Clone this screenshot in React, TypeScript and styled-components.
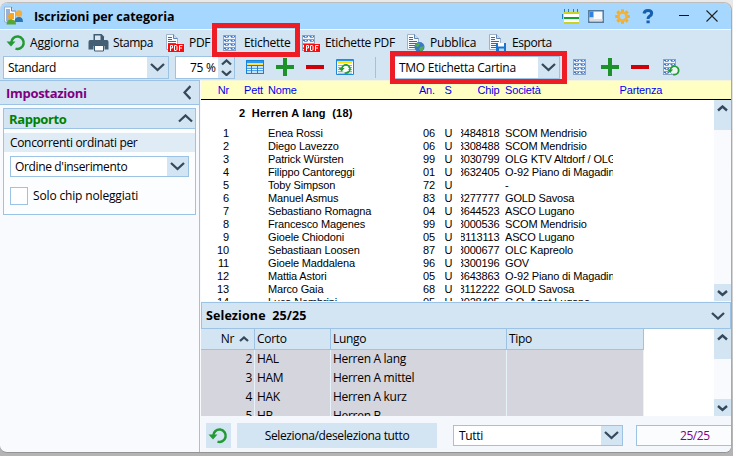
import React from 'react';
import styled, { createGlobalStyle, css } from 'styled-components';

const LINE = '#9cc3e3';
const PANEL = '#d3e5f3';
const PALE = '#f8fafd';
const RED = '#ee1c25';

const Global = createGlobalStyle`
  * { box-sizing: border-box; }
  body { margin: 0; overflow: hidden; background: #b5b5b5; }
  #root { font: 12px/16px "Open Sans", "Noto Sans", sans-serif; color: #000; }
`;

const Desktop = styled.div`
  width: 733px; height: 456px; padding-top: 3px;
  background: linear-gradient(#e9e9e9 0, #d4d4d4 60%, #b4b4b4 98%);
`;
const Window = styled.div`
  width: 732px; height: 450px; position: relative; display: flex; flex-direction: column;
  background: ${PALE}; border-right: 1px solid #a9a9a9; border-bottom: 1px solid #949494;
  border-radius: 8px 8px 7px 7px; overflow: hidden; box-shadow: 0 -1px 0 #bdbdbd;
`;
const Text = styled.span<{ $ls?: number; $bold?: boolean; $size?: number; $color?: string }>`
  white-space: pre; letter-spacing: ${p => p.$ls ?? -0.3}px;
  ${p => p.$bold && css`font-weight: 700;`}
  ${p => p.$size && css`font-size: ${p.$size}px;`}
  ${p => p.$color && css`color: ${p.$color};`}
`;

const TitleBar = styled.header`
  height: 27px; flex: none; display: flex; align-items: center; padding: 0 7px 0 4px;
  background: #a6d7ff; border-bottom: 1px solid #f4faff;
`;
const TitleText = styled.div`flex: 1; padding: 1px 0 0 8px;`;
const TitleIcons = styled.div`display: grid; grid-template-columns: 26px 26px 26px 38px 28px 18px; height: 20px;`;

const Toolbar = styled.div`flex: none; height: 50px; background: ${PANEL};`;
const Actions = styled.div`
  display: grid; height: 26px; padding-left: 4px; align-items: center;
  grid-template-columns: 83px 76px 55px 81px 105px 82px 80px;
`;
const Action = styled.div`display: flex; align-items: center; & > svg { margin-right: 2px; flex: none; }`;
const Controls = styled.div`display: flex; height: 24px; padding-left: 3px; align-items: flex-start; & > svg { flex: none; }`;
const Gap = styled.div<{ $w: number }>`width: ${p => p.$w}px; flex: none;`;
const Separator = styled.div`width: 1px; height: 21px; margin: 1px 18px 0 21px; background: ${LINE};`;

const Combo = styled.div<{ $w: number; $h: number; $pad?: number }>`
  flex: none; width: ${p => p.$w}px; height: ${p => p.$h}px; display: flex; align-items: center;
  border: 1px solid ${LINE}; background: #fff; padding-left: ${p => p.$pad ?? 4}px; justify-content: space-between;
`;
const ComboArrow = styled.div`
  width: 21px; align-self: stretch; display: grid; place-items: center;
  background: ${PANEL};
`;
const Spin = styled.div`
  width: 16px; align-self: stretch; display: grid; grid-template-rows: 1fr 1fr; place-items: center;
  background: ${PANEL};
`;

const Main = styled.div`flex: 1; min-height: 0; display: grid; grid-template-columns: 200px 531px;`;
const Side = styled.aside`border-right: 1px solid ${LINE}; border-top: 1px solid ${LINE};`;
const SideHead = styled.div`
  height: 24px; display: flex; align-items: center; justify-content: space-between;
  padding: 0 8px 0 6px; background: ${PANEL}; border-bottom: 1px solid ${LINE};
`;
const Group = styled.section`margin: 3px; height: 107px; border: 1px solid ${LINE}; background: #fcfdfe;`;
const GroupHead = styled.div`
  height: 20px; display: flex; align-items: center; justify-content: space-between;
  padding: 0 2px 0 5px; background: ${PANEL}; border-bottom: 1px solid ${LINE};
`;
const FieldLabel = styled.div`height: 19px; line-height: 19px; margin: 4px 0; padding-left: 6px; background: #dfebf5;`;
const Field = styled.div`padding-left: 6px;`;
const CheckRow = styled.label`display: flex; align-items: center; gap: 5px; padding: 10px 0 0 6px;`;
const CheckBox = styled.span`width: 18px; height: 18px; border: 1px solid ${LINE}; background: #fff;`;

const Content = styled.main`padding-left: 1px; display: flex; flex-direction: column; min-width: 0;`;
const ReportHead = styled.div`
  height: 20px; flex: none; background: #ffffc4; border-bottom: 1px solid #000; border-top: 1px solid #f2f5da; color: #0000f0;
`;
const ReportBody = styled.div`height: 201px; flex: none; display: flex; background: #fff; overflow: hidden;`;
const ReportPage = styled.div`width: 513px; overflow: hidden;`;
const ReportGrid = styled.div`
  display: grid; grid-template-columns: 28px 34px 5px 150px 17px 9.5px 12px 4.5px 38.5px 5.5px 108px 6.5px 60px;
  height: 13px; font: 11px/13px "Liberation Sans", sans-serif; letter-spacing: -0.15px; white-space: pre;
`;
const HeadGrid = styled(ReportGrid)`padding-top: 3px; height: 18px;`;
const Cell = styled.span<{ $col: number; $right?: boolean; $clip?: boolean }>`
  grid-column: ${p => p.$col}; grid-row: 1; min-width: 0; display: flex;
  justify-content: ${p => (p.$right ? 'flex-end' : 'flex-start')};
  ${p => p.$clip && css`overflow: hidden;`}
`;
const Category = styled.div`
  height: 27px; padding: 7px 0 0 38px; white-space: pre;
  font: 700 11px/13px "Liberation Sans", sans-serif; letter-spacing: 0.2px;
`;
const Scroll = styled.div`
  width: 17px; margin-left: auto; display: flex; flex-direction: column; justify-content: space-between; background: ${PALE};
`;
const ScrollTop = styled.div`height: 30px; background: ${PANEL}; padding: 5px 0 0 3px; line-height: 0;`;
const ScrollEnd = styled.div`height: 17px; background: ${PANEL}; padding: 6px 0 0 3px; line-height: 0;`;

const SelectionBar = styled.div`
  height: 27px; flex: none; margin-top: 1px; display: flex; align-items: center; justify-content: space-between;
  padding: 0 5px 0 4px; background: ${PANEL}; border: 1px solid ${LINE};
`;
const TableArea = styled.div`height: 87px; flex: none; display: flex; background: #fff; overflow: hidden;`;
const Table = styled.div`width: 443px; height: 87px; overflow: hidden;`;
const columns = css`display: grid; grid-template-columns: 54px 76px 176px 137px;`;
const TableHead = styled.div`${columns} height: 21px; background: ${PANEL}; border-bottom: 1px solid ${LINE};`;
const TableRow = styled.div`${columns} height: 19px; background: #d5d5de;`;
const HeadCell = styled.div<{ $right?: boolean }>`
  border-right: 1px solid ${LINE}; padding: 0 5px 0 2px; display: flex; gap: 5px; align-items: center;
  justify-content: ${p => (p.$right ? 'flex-end' : 'flex-start')};
`;
const DataCell = styled.div<{ $right?: boolean }>`
  border-right: 1px solid #e8f2fb; padding: 1px 2px 0 2px; text-align: ${p => (p.$right ? 'right' : 'left')};
`;
const Footer = styled.footer`flex: 1; display: flex; align-items: flex-start; padding: 7px 0 0 5px; background: #f4f8fc;`;
const Button = styled.button<{ $w: number }>`
  width: ${p => p.$w}px; height: 25px; padding: 0; border: 0; display: grid; place-items: center;
  background: ${PANEL}; font: inherit; color: inherit; margin-right: 6px; flex: none;
`;
const FooterCombo = styled.div`margin: 2px 13px 0 10px;`;
const Counter = styled.div`
  height: 21px; margin-top: 2px; flex: 1; border: 1px solid ${LINE}; border-right: 0;
  padding-left: 43px; line-height: 19px; background: #fafcfe;
`;
const Highlight = styled.div<{ $x: number; $y: number; $w: number; $h: number }>`
  position: absolute; left: ${p => p.$x}px; top: ${p => p.$y}px; width: ${p => p.$w}px; height: ${p => p.$h}px;
  border: 5px solid ${RED}; pointer-events: none;
`;

/* Icons */
type Dir = 'up' | 'down' | 'left';
const Chevron = ({ dir, w = 15, s = 2.3 }: { dir: Dir; w?: number; s?: number }) => {
  const h = w / 2 + 1;
  const d = { up: `M1 ${h - 1}L${w / 2} 1.5L${w - 1} ${h - 1}`, down: `M1 1L${w / 2} ${h - 1.5}L${w - 1} 1`, left: `M${h - 1} 1L1.5 ${w / 2}L${h - 1} ${w - 1}` }[dir];
  const [vw, vh] = dir === 'left' ? [h, w] : [w, h];
  return <svg width={vw} height={vh} viewBox={`0 0 ${vw} ${vh}`}><path d={d} fill="none" stroke="#34495c" strokeWidth={s} /></svg>;
};
const RefreshShape = ({ color = '#249a34' }) => (
  <>
    <path d="M4.8 8.6A6.2 6.2 0 1 1 9 14.6" fill="none" stroke={color} strokeWidth="2.5" />
    <path d="M0 7.4H9L4.5 12.6Z" fill={color} />
  </>
);
const Refresh = () => <svg width="24" height="20" viewBox="0 0 24 20"><g transform="translate(2.5 1)"><RefreshShape /></g></svg>;
const Printer = () => (
  <svg width="24" height="20" viewBox="0 0 24 20">
    <path d="M6.500 1h8l2.500 2.500V7H6.500z" fill="#3f5b70" /><path d="M8 2.500h5.500V7H8z" fill="#d9e6ef" />
    <path d="M3 7h17q1.500 0 1.500 2v7.500h-4V13h-11v3.500h-5V9q0-2 1.500-2z" fill="#456074" />
    <path d="M7.500 12.500h9V18h-9z" fill="#fff" stroke="#3f5b70" />
  </svg>
);
const Doc = () => (
  <>
    <path d="M3.5 1.5h7l4 4v11h-11z" fill="#f8fbff" stroke="#9db3cc" />
    <path d="M10.5 1.5v4h4" fill="#c9ddf0" stroke="#5f85b5" />
    <path d="M5 4.500h4M5 6.500h4M5 8.500h8M5 10.500h8M5 12.500h8M5 14.500h6" stroke="#3e69ae" />
  </>
);
const PdfTag = ({ x = 5 }: { x?: number }) => (
  <>
    <rect x={x} y="11" width="16" height="8" fill="#fa0c0c" />
    <path transform={`translate(${x} 0)`} d="M2.5 18v-5.5h2v2.5h-2M6.5 12.5v5h1.5q1-.5 1-1v-3q0-1-1-1zM11.5 18v-5.5h3M11.5 15h2.5" fill="none" stroke="#fff" />
  </>
);
const Labels = () => (
  <>
    <path d="M5 2h13v16H5z" fill="#f0f5fb" />
    {[2.5, 6.5, 10.5, 14.5].map(y => (
      <g key={y}>
        <path d={`M5 ${y}H18`} stroke="#8aa2bd" />
        <path d={`M6 ${y + 1}h2M9.500 ${y + 1}h1.500M12.500 ${y + 1}h2M16 ${y + 1}h1`} stroke="#3f72c0" />
        <path d={`M7 ${y + 2}h3.500M13 ${y + 2}h3.500`} stroke="#6f93cc" strokeWidth=".9" />
      </g>
    ))}
    <path d="M5 17.500h13" stroke="#8aa2bd" />
    <path d="M5.500 2v16M17.500 2v16" stroke="#8fa6c0" />
  </>
);
const S = ({ children, w = 24 }: { children: React.ReactNode; w?: number }) => <svg width={w} height="20" viewBox={`0 0 ${w} 20`}>{children}</svg>;
const Globe = () => (
  <>
    <circle cx="15.5" cy="14" r="5" fill="#3978c8" />
    <path d="M12 11q3-2 4 0l-2 3-3-1zM16 14l4-1-1 4-2 2-2-3z" fill="#50ad4b" />
  </>
);
const Floppy = () => (
  <>
    <path d="M10 10h10v9H11l-1-1z" fill="#1976d2" /><path d="M12 10h6v3.500h-6z" fill="#fff" /><path d="M13 15.500h5V19h-5z" fill="#b5d8fa" />
  </>
);
const GridIcon = () => (
  <svg width="18" height="24" viewBox="0 0 18 24">
    <path d="M0 4h18v14H0z" fill="#1583dc" /><path d="M1 5h16v2H1z" fill="#2b99ef" />
    <path d="M1 8h16" stroke="#ffe14a" strokeWidth="2" />
    <path d="M1 11h4M6 11h5M12 11h5M1 13.500h4M6 13.500h5M12 13.500h5M1 16h4M6 16h5M12 16h5" stroke="#fff" strokeWidth="1.500" />
  </svg>
);
const Plus = () => <svg width="18" height="24" viewBox="0 0 18 24"><path d="M0 11h18M9 2v18" stroke="#1e922a" strokeWidth="4" /></svg>;
const Minus = () => <svg width="18" height="24" viewBox="0 0 18 24"><path d="M0 11h18" stroke="#cf0008" strokeWidth="4" /></svg>;
const WindowRefresh = () => (
  <svg width="18" height="24" viewBox="0 0 18 24">
    <path d="M.5 3.500h17v15H.5z" fill="#fff" stroke="#2087d5" /><path d="M1 4.500h16" stroke="#2296e8" strokeWidth="1.500" />
    <path d="M2 6.500h14" stroke="#ffe000" strokeWidth="2" />
    <path d="M2 9.500h14M2 11.500h14M2 13.500h14M2 15.500h14M2 17.200h14" stroke="#8d9699" strokeWidth=".8" />
    <g transform="translate(2.700 7.200) scale(.66)"><circle cx="9.500" cy="8.500" r="5" fill="#fff" /><RefreshShape /></g>
  </svg>
);
const LabelsRefresh = () => (
  <svg width="24" height="24" viewBox="0 0 24 24">
    <g transform="translate(-5 1)"><Labels /></g>
    <g transform="translate(4 8.500) scale(.68)"><circle cx="10" cy="8.500" r="5.500" fill="#eef6f0" /><RefreshShape /></g>
  </svg>
);
const AppIcon = () => (
  <svg width="22" height="20" viewBox="0 0 22 20">
    <g transform="translate(-3 -.500)"><Doc /></g>
    <circle cx="7" cy="10.500" r="3" fill="#f5a623" /><circle cx="15" cy="7.500" r="3.200" fill="#f3ad38" />
    <path d="M10.500 16q0-5 4.500-5 4 0 4 5z" fill="#2c78b5" /><path d="M2.500 18.500q0-5 4.500-5 5 0 5 5z" fill="#54a832" />
  </svg>
);
const Lines = () => (
  <svg width="18" height="20" viewBox="0 0 18 20">
    <path d="M2 6h15v11H2z" fill="#fff" /><path d="M2.500 3v4M6.500 3v3M11.500 3v3M15.500 3v3M.500 8v5" stroke="#2380c0" />
    <path d="M2 7h15M2 17h15" stroke="#cbd321" strokeWidth="2" /><path d="M2 12h15" stroke="#11a52a" strokeWidth="2" />
  </svg>
);
const Pane = () => (
  <svg width="18" height="20" viewBox="0 0 18 20">
    <path d="M.8 4.800h14.400v11.400H.8z" fill="#fafafa" stroke="#55799b" strokeWidth="1.500" /><path d="M1.500 5.500h4v6h-4z" fill="#2f82e2" /><path d="M1.500 11.500h4V15h-4zM5 13h9.500v2H5z" fill="#d9dce0" />
  </svg>
);
const Gear = () => (
  <svg width="18" height="20" viewBox="0 0 18 20">
    {[0, 45, 90, 135].map(a => <path key={a} d="M8.500 3.200v14.600" transform={`rotate(${a} 8.500 10.500)`} stroke="#eead35" strokeWidth="3" />)}
    <circle cx="8.500" cy="10.500" r="5.300" fill="#f0b33d" /><circle cx="8.500" cy="10.500" r="2.700" fill="#a6d7ff" />
  </svg>
);
const Help = () => (
  <svg width="18" height="20" viewBox="0 0 18 20">
    <path d="M4 7.600Q4.500 4.600 8 4.600t3.700 2.700q0 1.700-2.200 3-1.500 1-1.500 2.700" fill="none" stroke="#155fae" strokeWidth="3" /><path d="M6.500 14.500h3.200V17.200H6.500z" fill="#155fae" />
  </svg>
);
const Minimize = () => <svg width="18" height="20" viewBox="0 0 18 20"><path d="M9 9.500h10" transform="translate(-8 0)" stroke="#111" /></svg>;
const Close = () => <svg width="14" height="20" viewBox="0 0 14 20"><path d="M.500 4.500l11 11M11.500 4.500l-11 11" stroke="#222" strokeWidth="1.100" /></svg>;

type Entry = [string, string, string, string, string];
const entries: Entry[] = [
  ['1', 'Enea Rossi', '06', '8484818', 'SCOM Mendrisio'],
  ['2', 'Diego Lavezzo', '06', '8308488', 'SCOM Mendrisio'],
  ['3', 'Patrick Würsten', '99', '8030799', 'OLG KTV Altdorf / OLG'],
  ['4', 'Filippo Cantoreggi', '01', '8632405', 'O-92 Piano di Magadino'],
  ['5', 'Toby Simpson', '72', '', '-'],
  ['6', 'Manuel Asmus', '83', '8277777', 'GOLD Savosa'],
  ['7', 'Sebastiano Romagna', '04', '8644523', 'ASCO Lugano'],
  ['8', 'Francesco Magenes', '99', '8000536', 'SCOM Mendrisio'],
  ['9', 'Gioele Chiodoni', '05', '8113113', 'ASCO Lugano'],
  ['10', 'Sebastiaan Loosen', '87', '8000677', 'OLC Kapreolo'],
  ['11', 'Gioele Maddalena', '96', '8300196', 'GOV'],
  ['12', 'Mattia Astori', '05', '8643863', 'O-92 Piano di Magadino'],
  ['13', 'Marco Gaia', '68', '8112222', 'GOLD Savosa'],
  ['14', 'Luca Nembrini', '05', '8028405', 'C.O. Aget Lugano'],
];
const categories = [['2', 'HAL', 'Herren A lang'], ['3', 'HAM', 'Herren A mittel'], ['4', 'HAK', 'Herren A kurz'], ['5', 'HB', 'Herren B']];

const ScrollBar = () => (
  <Scroll>
    <ScrollTop><Chevron dir="up" w={11} s={2.4} /></ScrollTop>
    <ScrollEnd><Chevron dir="down" w={11} s={2.4} /></ScrollEnd>
  </Scroll>
);

export default function App() {
  return (
    <Desktop>
      <Global />
      <Window>
        <TitleBar>
          <AppIcon />
          <TitleText><Text $bold $size={12.5} $ls={-0.07}>Iscrizioni per categoria</Text></TitleText>
          <TitleIcons><Lines /><Pane /><Gear /><Help /><Minimize /><Close /></TitleIcons>
        </TitleBar>
        <Toolbar>
          <Actions>
            <Action><Refresh /><Text $ls={-0.1}>Aggiorna</Text></Action>
            <Action><Printer /><Text $ls={-0.45}>Stampa</Text></Action>
            <Action><S><Doc /><PdfTag /></S><Text>PDF</Text></Action>
            <Action><S><Labels /></S><Text>Etichette</Text></Action>
            <Action><S><g transform="translate(-2 0)"><Labels /></g><PdfTag /></S><Text $ls={-0.35}>Etichette PDF</Text></Action>
            <Action><S><Doc /><Globe /></S><Text $ls={-0.2}>Pubblica</Text></Action>
            <Action><S><Doc /><Floppy /></S><Text $ls={-0.45}>Esporta</Text></Action>
          </Actions>
          <Controls>
            <Combo $w={166} $h={23}><Text $ls={-0.4}>Standard</Text><ComboArrow><Chevron dir="down" /></ComboArrow></Combo>
            <Gap $w={6} />
            <Combo $w={60} $h={23} $pad={14}><Text>75 %</Text><Spin><Chevron dir="up" w={11} /><Chevron dir="down" w={11} /></Spin></Combo>
            <Gap $w={11} /><GridIcon /><Gap $w={12} /><Plus /><Gap $w={12} /><Minus /><Gap $w={12} /><WindowRefresh />
            <Separator />
            <Combo $w={166} $h={23}><Text $ls={-0.27}>TMO Etichetta Cartina</Text><ComboArrow><Chevron dir="down" /></ComboArrow></Combo>
            <Gap $w={13} />
            <svg width="14" height="24" viewBox="0 0 14 24"><g transform="translate(-5 1)"><Labels /></g></svg>
            <Gap $w={14} /><Plus /><Gap $w={12} /><Minus /><Gap $w={14} /><LabelsRefresh />
          </Controls>
        </Toolbar>
        <Main>
          <Side>
            <SideHead><Text $bold $size={13} $color="#800080">Impostazioni</Text><Chevron dir="left" w={15} /></SideHead>
            <Group>
              <GroupHead><Text $bold $size={13} $ls={-0.4} $color="#008000">Rapporto</Text><Chevron dir="up" w={15} /></GroupHead>
              <FieldLabel><Text $ls={-0.33}>Concorrenti ordinati per</Text></FieldLabel>
              <Field><Combo $w={179} $h={21}><Text $ls={-0.35}>Ordine d'inserimento</Text><ComboArrow><Chevron dir="down" /></ComboArrow></Combo></Field>
              <CheckRow><CheckBox /><Text $ls={-0.15}>Solo chip noleggiati</Text></CheckRow>
            </Group>
          </Side>
          <Content>
            <ReportHead>
              <HeadGrid>
                <Cell $col={1} $right>Nr</Cell><Cell $col={2} $right>Pett</Cell><Cell $col={4}>Nome</Cell>
                <Cell $col={5} $right>An.</Cell><Cell $col={7}>S</Cell><Cell $col={9} $right>Chip</Cell>
                <Cell $col={11}>Società</Cell><Cell $col={13}>Partenza</Cell>
              </HeadGrid>
            </ReportHead>
            <ReportBody>
              <ReportPage>
                <Category>2  Herren A lang  (18)</Category>
                {entries.map(([nr, name, year, chip, club]) => (
                  <ReportGrid key={nr}>
                    <Cell $col={1} $right>{nr}</Cell><Cell $col={4}>{name}</Cell><Cell $col={5} $right>{year}</Cell>
                    <Cell $col={7}>U</Cell><Cell $col={9} $right $clip>{chip}</Cell><Cell $col={11} $clip>{club}</Cell>
                  </ReportGrid>
                ))}
              </ReportPage>
              <ScrollBar />
            </ReportBody>
            <SelectionBar><Text $bold $size={12.5} $ls={0.1}>Selezione  25/25</Text><Chevron dir="down" w={14} /></SelectionBar>
            <TableArea>
              <Table>
                <TableHead>
                  <HeadCell $right><Text>Nr</Text><Chevron dir="up" w={10} /></HeadCell>
                  <HeadCell><Text>Corto</Text></HeadCell><HeadCell><Text>Lungo</Text></HeadCell><HeadCell><Text>Tipo</Text></HeadCell>
                </TableHead>
                {categories.map(([nr, short, long]) => (
                  <TableRow key={nr}>
                    <DataCell $right><Text>{nr}</Text></DataCell><DataCell><Text>{short}</Text></DataCell>
                    <DataCell><Text $ls={-0.3}>{long}</Text></DataCell><DataCell />
                  </TableRow>
                ))}
              </Table>
              <ScrollBar />
            </TableArea>
            <Footer>
              <Button $w={25}><S><g transform="translate(1.5 1)"><RefreshShape /></g></S></Button>
              <Button $w={200}><Text $ls={-0.35}>Seleziona/deseleziona tutto</Text></Button>
              <FooterCombo><Combo $w={170} $h={21} $pad={5}><Text>Tutti</Text><ComboArrow><Chevron dir="down" /></ComboArrow></Combo></FooterCombo>
              <Counter><Text $ls={-0.45} $color="#800080">25/25</Text></Counter>
            </Footer>
          </Content>
        </Main>
        <Highlight $x={212} $y={20} $w={88} $h={34} />
        <Highlight $x={390} $y={48} $w={177} $h={33} />
      </Window>
    </Desktop>
  );
}
